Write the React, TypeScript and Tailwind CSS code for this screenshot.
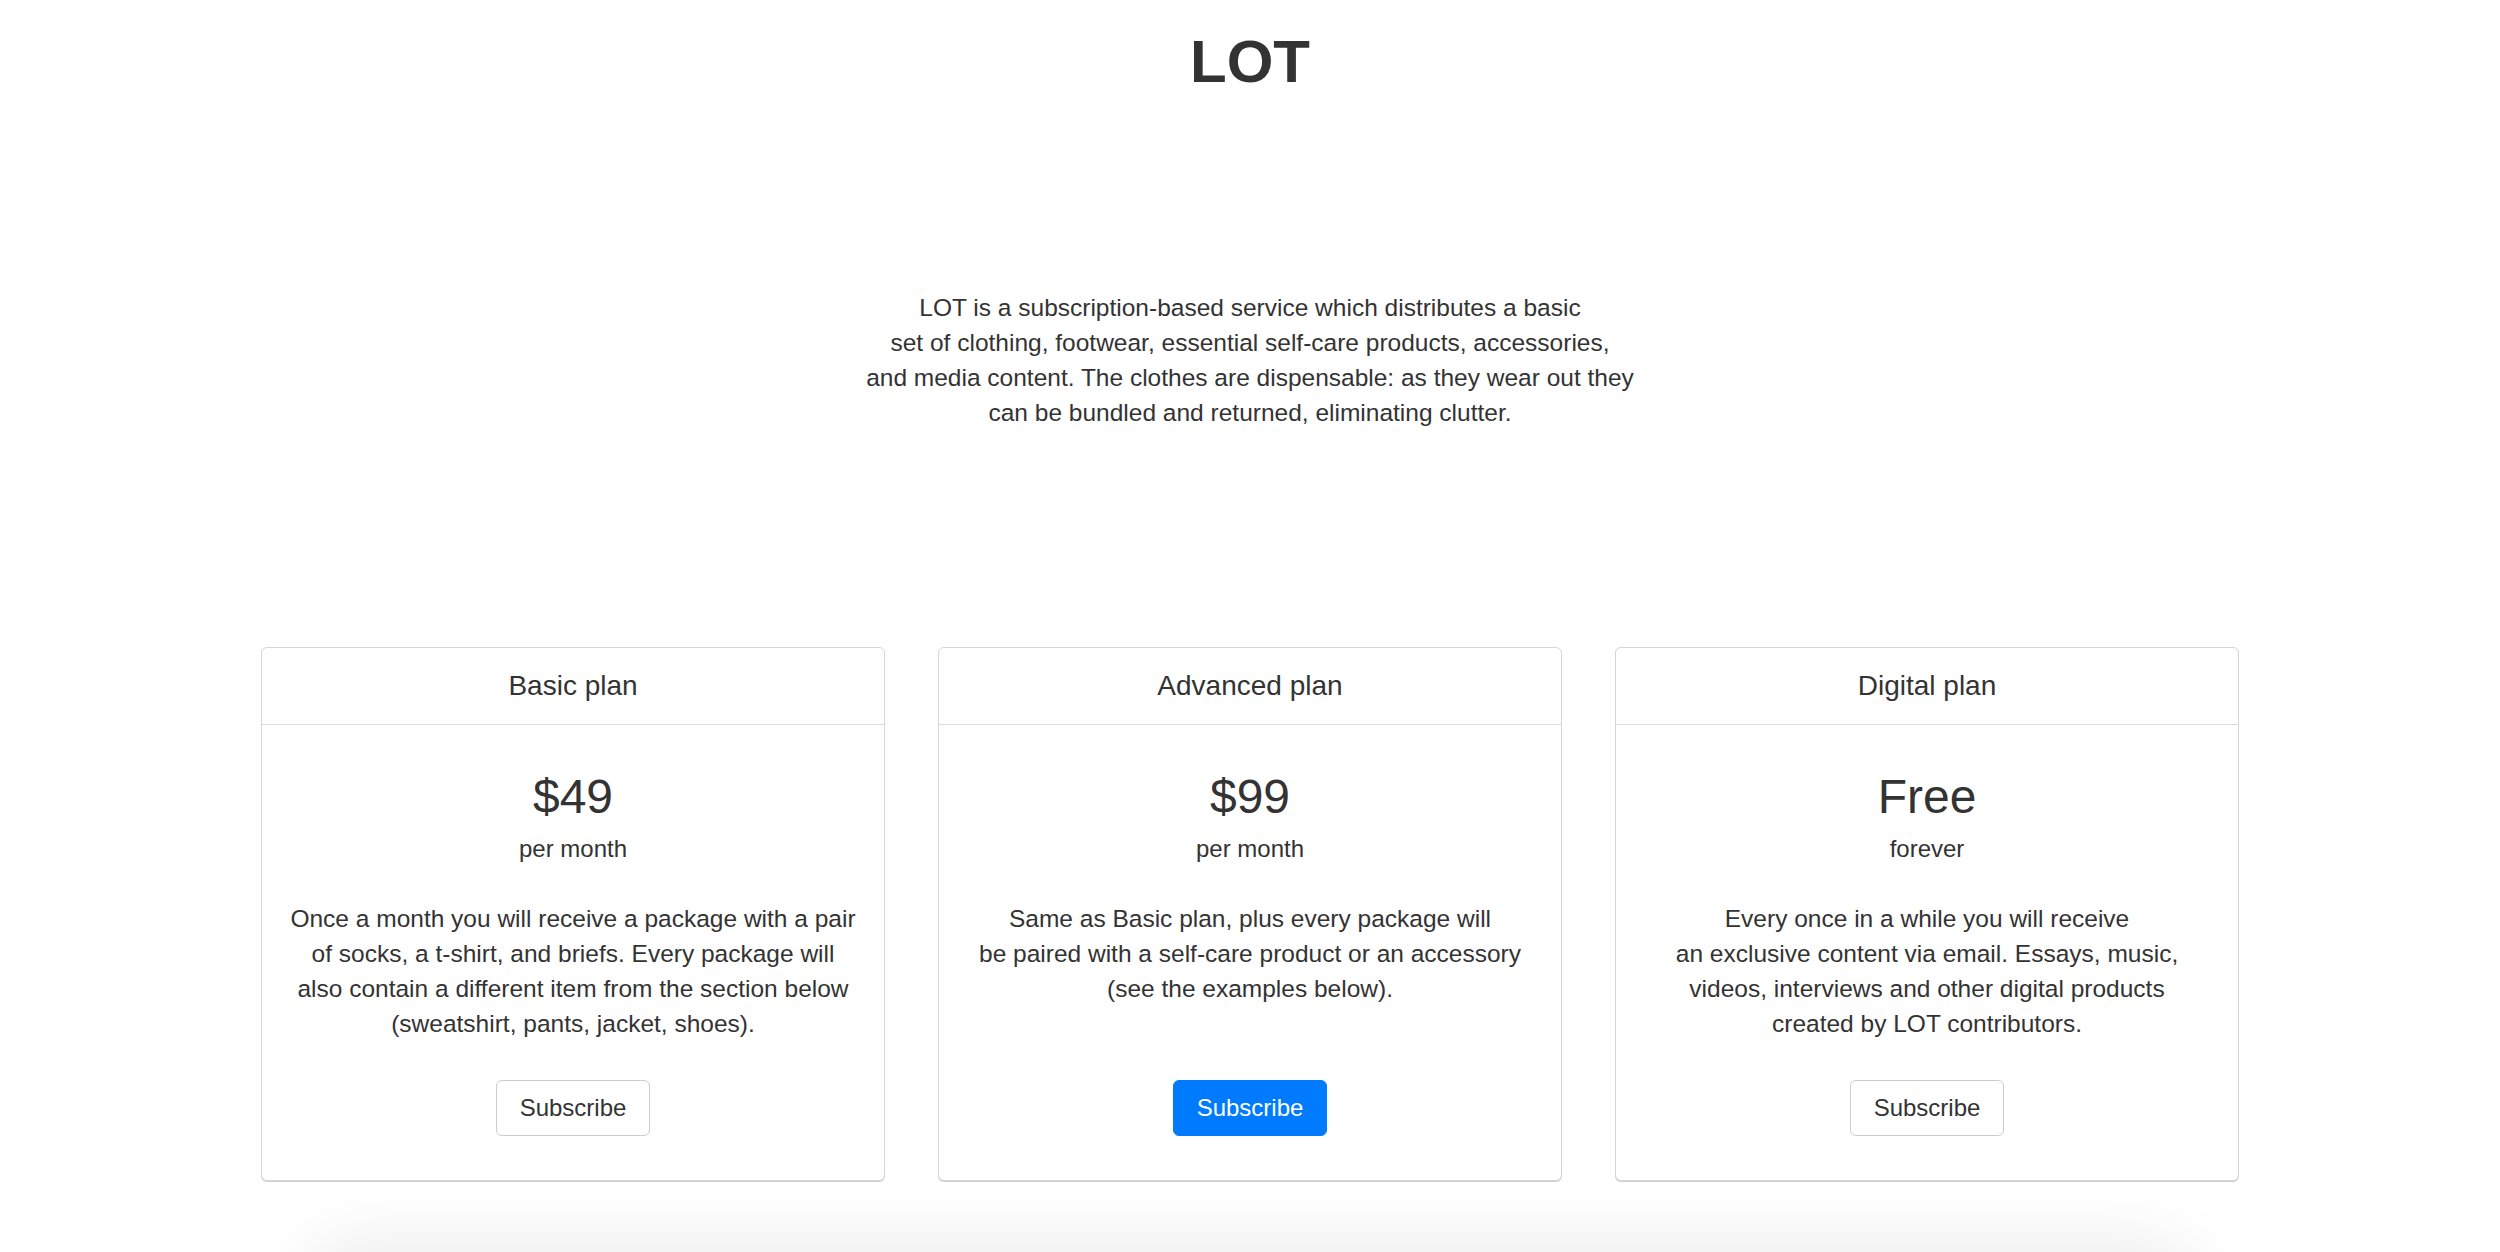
import React from 'react';

interface Plan {
  name: string;
  price: string;
  period: string;
  lines: string[];
  primary?: boolean;
}

const plans: Plan[] = [
  {
    name: 'Basic plan',
    price: '$49',
    period: 'per month',
    lines: [
      'Once a month you will receive a package with a pair',
      'of socks, a t-shirt, and briefs. Every package will',
      'also contain a different item from the section below',
      '(sweatshirt, pants, jacket, shoes).',
    ],
  },
  {
    name: 'Advanced plan',
    price: '$99',
    period: 'per month',
    lines: [
      'Same as Basic plan, plus every package will',
      'be paired with a self-care product or an accessory',
      '(see the examples below).',
    ],
    primary: true,
  },
  {
    name: 'Digital plan',
    price: 'Free',
    period: 'forever',
    lines: [
      'Every once in a while you will receive',
      'an exclusive content via email. Essays, music,',
      'videos, interviews and other digital products',
      'created by LOT contributors.',
    ],
  },
];

function PlanCard({ plan }: { plan: Plan }) {
  return (
    <div className="flex flex-col rounded-[6px] border border-[#d6d6d6] bg-white shadow-[0_1px_0_#cfcfcf] text-center">
      <div className="h-[77px] flex items-center justify-center border-b border-[#dcdcdc] text-[28px]">
        {plan.name}
      </div>
      <div className="flex flex-col items-center pt-[43px] pb-[44px]">
        <div className="text-[48px] leading-[58px]">{plan.price}</div>
        <div className="text-[24px] leading-[35px] mt-[5px]">{plan.period}</div>
        {/* fixed height so buttons line up across cards */}
        <div className="mt-[35px] h-[140px] text-[24.5px] leading-[35px]">
          {plan.lines.map((l, i) => (
            <div key={i}>{l}</div>
          ))}
        </div>
        <button
          className={
            plan.primary
              ? 'mt-[39px] h-[56px] px-[23px] rounded-[6px] border border-[#007bff] bg-[#007bff] text-white text-[24px]'
              : 'mt-[39px] h-[56px] px-[23px] rounded-[6px] border border-[#cccccc] bg-white text-[#333] text-[24px]'
          }
        >
          Subscribe
        </button>
      </div>
    </div>
  );
}

export default function App() {
  return (
    <div className="min-h-screen bg-white text-[#333] font-['Liberation_Sans',Arial,sans-serif] overflow-hidden">
      <h1 className="pt-[26px] text-center text-[60px] leading-[72px] font-bold">LOT</h1>

      <p className="mt-[192px] text-center text-[24.5px] leading-[35px]">
        LOT is a subscription-based service which distributes a basic
        <br />
        set of clothing, footwear, essential self-care products, accessories,
        <br />
        and media content. The clothes are dispensable: as they wear out they
        <br />
        can be bundled and returned, eliminating clutter.
      </p>

      <div className="mt-[217px] mx-auto w-[1978px] grid grid-cols-3 gap-[53px]">
        {plans.map((p) => (
          <PlanCard key={p.name} plan={p} />
        ))}
      </div>

      {/* next section, only its shadow peeks into view */}
      <div className="mt-[84px] mx-auto w-[1840px] h-[300px] bg-[#ececec] shadow-[0_0_70px_12px_rgba(0,0,0,0.1)]" />
    </div>
  );
}
